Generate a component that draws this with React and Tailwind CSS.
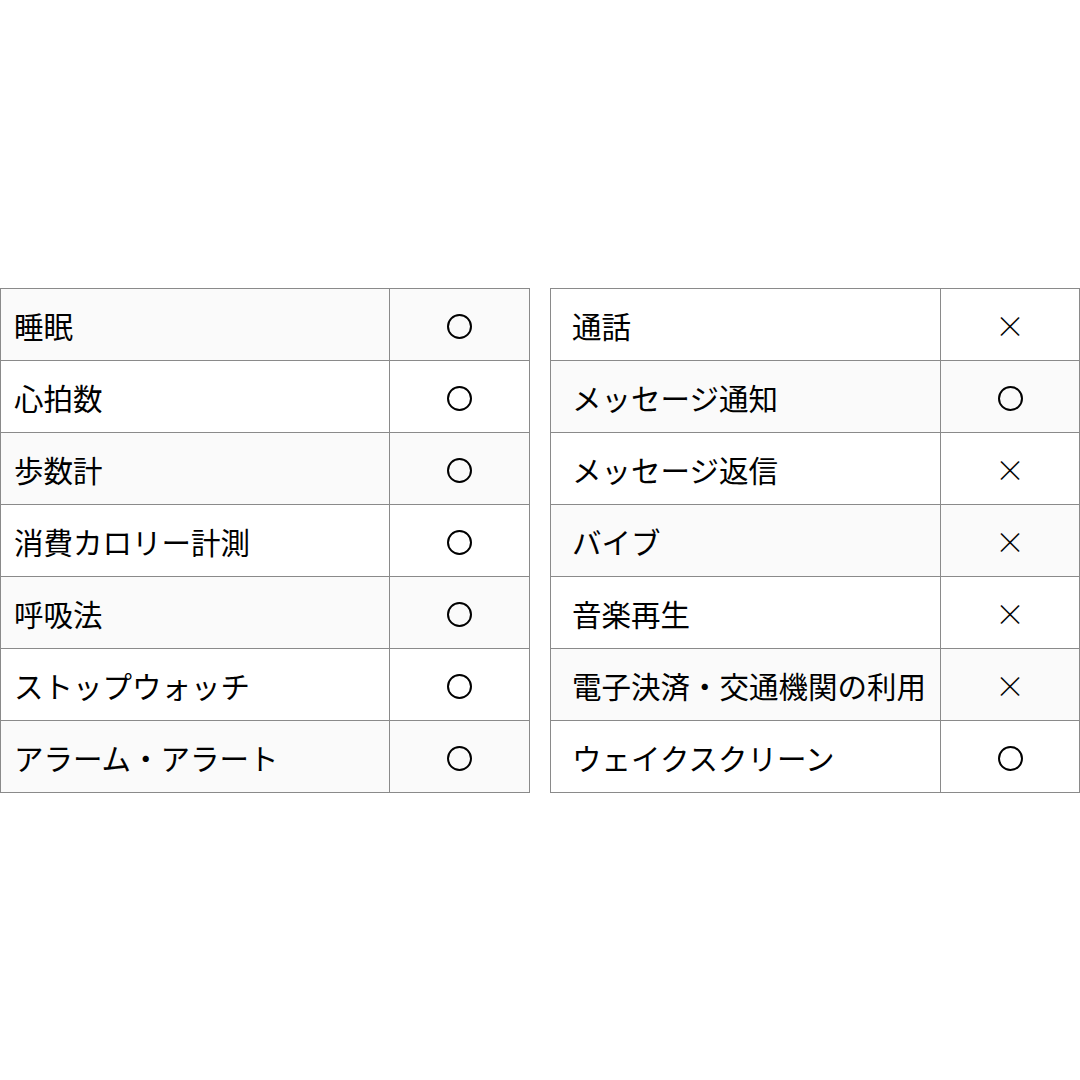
const left = [
  ['睡眠', '○'],
  ['心拍数', '○'],
  ['歩数計', '○'],
  ['消費カロリー計測', '○'],
  ['呼吸法', '○'],
  ['ストップウォッチ', '○'],
  ['アラーム・アラート', '○'],
];

const right = [
  ['通話', '×'],
  ['メッセージ通知', '○'],
  ['メッセージ返信', '×'],
  ['バイブ', '×'],
  ['音楽再生', '×'],
  ['電子決済・交通機関の利用', '×'],
  ['ウェイクスクリーン', '○'],
];

function Mark({ value }) {
  if (value === '○') {
    return <span className="inline-block h-[25px] w-[25px] rounded-full border-2 border-black align-middle" aria-label="○" />;
  }
  return (
    <span className="font-['Noto_Sans_CJK_JP'] text-[30px] font-extralight leading-none text-black">×</span>
  );
}

function SpecTable({ rows, stripeOdd, firstCol, pad }) {
  return (
    <table className="w-[530px] table-fixed border-collapse">
      <colgroup>
        <col className={firstCol} />
        <col />
      </colgroup>
      <tbody>
        {rows.map(([label, mark], i) => {
          const striped = stripeOdd ? i % 2 === 0 : i % 2 === 1;
          return (
            <tr key={label} className={striped ? 'bg-[#fafafa]' : 'bg-white'}>
              <td className={`h-[72px] border border-[#8a8a8a] pt-[3px] ${pad} text-[29.5px] leading-none font-normal whitespace-nowrap text-black`}>
                {label}
              </td>
              <td className="h-[72px] border border-[#8a8a8a] pt-[3px] text-center">
                <Mark value={mark} />
              </td>
            </tr>
          );
        })}
      </tbody>
    </table>
  );
}

export default function App() {
  return (
    <div
      className="flex h-[1080px] w-[1080px] items-center justify-between bg-white"
      style={{ fontFamily: '"Noto Sans CJK JP", sans-serif' }}
    >
      <SpecTable rows={left} stripeOdd firstCol="w-[389px]" pad="pl-[13px]" />
      <SpecTable rows={right} stripeOdd={false} firstCol="w-[390px]" pad="pl-[21px]" />
    </div>
  );
}
